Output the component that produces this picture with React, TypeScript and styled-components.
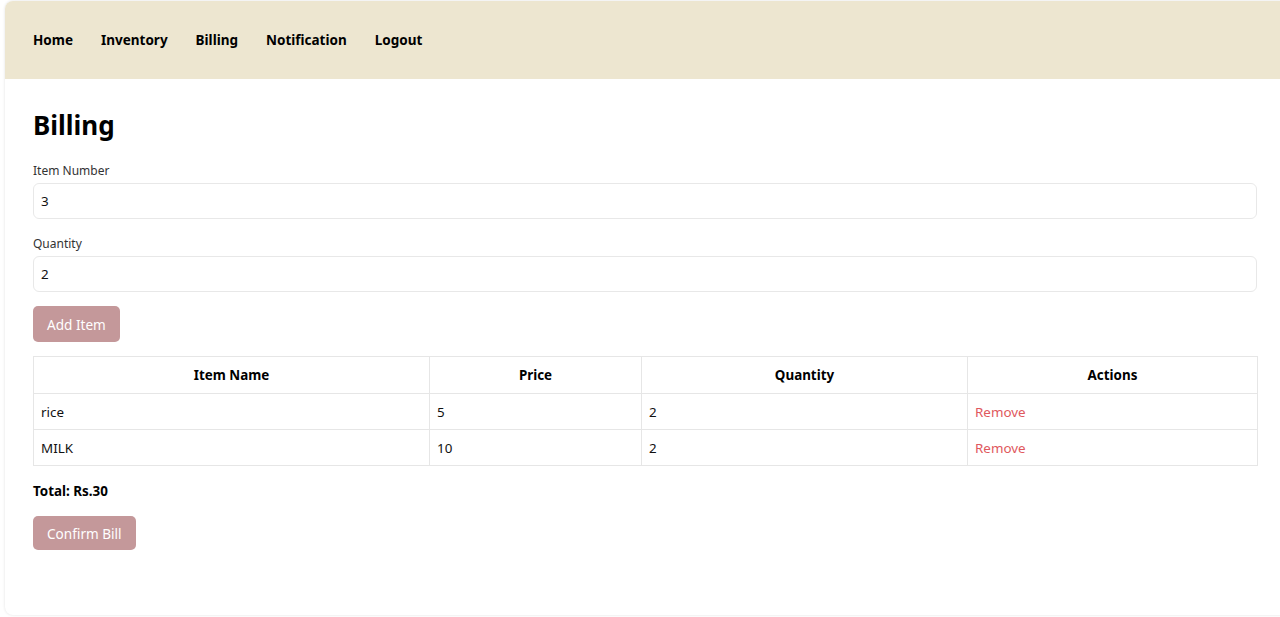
import React from "react";
import styled, { createGlobalStyle } from "styled-components";

const Global = createGlobalStyle`
  html, body { margin: 0; padding: 0; background: #ffffff; }
  body { font-family: "Noto Sans", "Open Sans", sans-serif; color: #000; overflow: hidden; }
  * { box-sizing: border-box; }
`;

const Page = styled.div`
  padding: 1px 0 0 5px;
  height: 617px;
  overflow: hidden;
`;

const Card = styled.div`
  width: calc(100% + 20px);
  height: 614px;
  background: #fff;
  border-radius: 8px;
  box-shadow: 0 0 3px rgba(0, 0, 0, 0.12);
  overflow: hidden;
`;

const NavBar = styled.nav`
  height: 78px;
  background: #ede6d0;
  display: flex;
  align-items: center;
  gap: 28px;
  padding: 0 28px;
`;

const NavLink = styled.a`
  font-size: 13.5px;
  font-weight: 700;
  color: #000;
  text-decoration: none;
  cursor: pointer;
`;

const Main = styled.main`
  padding: 26px 0 0 28px;
  display: flex;
  flex-direction: column;
  width: 1252px;
`;

const Title = styled.h1`
  margin: 0 0 17px;
  font-size: 26px;
  font-weight: 700;
  line-height: 40px;
`;

const Field = styled.div`
  display: flex;
  flex-direction: column;
  gap: 3px;
  margin-bottom: 16px;
  &:last-of-type {
    margin-bottom: 14px;
  }
`;

const Label = styled.label`
  font-size: 12px;
  color: #333;
  line-height: 18px;
`;

const Input = styled.input`
  height: 36px;
  border: 1px solid #e8e8e8;
  border-radius: 6px;
  padding: 0 7px;
  font-family: inherit;
  font-size: 13.4px;
  color: #111;
  outline: none;
`;

const Button = styled.button<{ $h?: number }>`
  align-self: flex-start;
  height: ${(p) => p.$h ?? 36}px;
  padding: 0 14px;
  border: none;
  border-radius: 5px;
  background: #c4989a;
  color: #fff;
  font-family: inherit;
  font-size: 13.6px;
`;

const Table = styled.table`
  margin-top: 14px;
  width: 1224px;
  border-collapse: collapse;
  table-layout: fixed;
`;

const Th = styled.th`
  height: 37px;
  border: 1px solid #e6e6e6;
  font-size: 13.4px;
  font-weight: 700;
  text-align: center;
`;

const Td = styled.td<{ $danger?: boolean }>`
  height: 36px;
  border: 1px solid #e6e6e6;
  padding: 0 7px;
  font-size: 13.4px;
  color: ${(p) => (p.$danger ? "#e0585d" : "#111")};
`;

const Total = styled.p`
  margin: 15px 0 15px;
  font-size: 13.4px;
  font-weight: 700;
  line-height: 20px;
`;

const rows = [
  { name: "rice", price: 5, qty: 2 },
  { name: "MILK", price: 10, qty: 2 },
];

export default function App() {
  return (
    <>
      <Global />
      <Page>
        <Card>
          <NavBar>
            {["Home", "Inventory", "Billing", "Notification", "Logout"].map((l) => (
              <NavLink key={l}>{l}</NavLink>
            ))}
          </NavBar>
          <Main>
            <Title>Billing</Title>
            <Field>
              <Label>Item Number</Label>
              <Input defaultValue="3" />
            </Field>
            <Field>
              <Label>Quantity</Label>
              <Input defaultValue="2" />
            </Field>
            <Button>Add Item</Button>
            <Table>
              <colgroup>
                <col style={{ width: 396 }} />
                <col style={{ width: 212 }} />
                <col style={{ width: 326 }} />
                <col style={{ width: 290 }} />
              </colgroup>
              <thead>
                <tr>
                  <Th>Item Name</Th>
                  <Th>Price</Th>
                  <Th>Quantity</Th>
                  <Th>Actions</Th>
                </tr>
              </thead>
              <tbody>
                {rows.map((r) => (
                  <tr key={r.name}>
                    <Td>{r.name}</Td>
                    <Td>{r.price}</Td>
                    <Td>{r.qty}</Td>
                    <Td $danger>Remove</Td>
                  </tr>
                ))}
              </tbody>
            </Table>
            <Total>Total: Rs.30</Total>
            <Button $h={34}>Confirm Bill</Button>
          </Main>
        </Card>
      </Page>
    </>
  );
}
